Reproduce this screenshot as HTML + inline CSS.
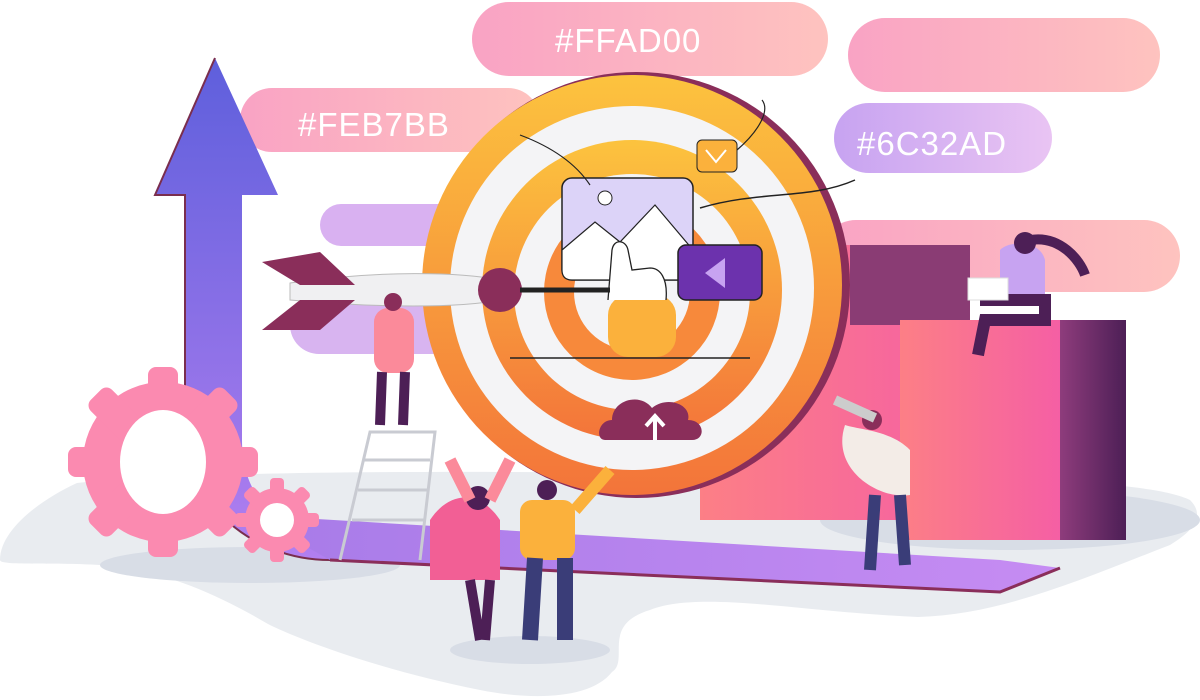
<!DOCTYPE html>
<html><head><meta charset="utf-8"><style>
html,body{margin:0;padding:0;background:#fff;}
svg{display:block}
text{font-family:"Liberation Sans",sans-serif;fill:#fff;font-size:33px;letter-spacing:1px}
</style></head><body>
<svg width="1200" height="700" viewBox="0 0 1200 700" xmlns="http://www.w3.org/2000/svg">
<defs>
<linearGradient id="pk" x1="0" x2="1"><stop offset="0" stop-color="#f9a3c4"/><stop offset="1" stop-color="#fec3bf"/></linearGradient>
<linearGradient id="pu" x1="0" x2="1"><stop offset="0" stop-color="#c7a3f1"/><stop offset="1" stop-color="#e9c4f3"/></linearGradient>
<linearGradient id="ar" x1="0" y1="0" x2="0" y2="1"><stop offset="0" stop-color="#5e5fdc"/><stop offset="1" stop-color="#b27ff0"/></linearGradient>
<linearGradient id="tg" x1="0" y1="0" x2="0" y2="1"><stop offset="0" stop-color="#fcc33e"/><stop offset="1" stop-color="#f3743a"/></linearGradient>
<linearGradient id="bx" x1="0" x2="1"><stop offset="0" stop-color="#fc7f86"/><stop offset="1" stop-color="#f55fa4"/></linearGradient>
<linearGradient id="bd" x1="0" x2="1"><stop offset="0" stop-color="#8e3c7c"/><stop offset="1" stop-color="#4d1f56"/></linearGradient>
<linearGradient id="fl" x1="0" x2="1"><stop offset="0" stop-color="#a77be8"/><stop offset="1" stop-color="#c68cf3"/></linearGradient>
</defs>
<!-- floor blob -->
<path d="M0 560 C0 530 40 500 77 483 C200 470 500 470 800 475 C1000 478 1150 480 1190 500 C1205 515 1195 530 1170 545 C1080 580 1000 615 918 617 C800 612 700 590 650 610 C600 625 630 660 612 672 C590 700 530 700 480 690 C380 670 300 640 268 624 C210 590 160 570 100 565 C50 562 0 566 0 560Z" fill="#e9ecf0"/>
<ellipse cx="530" cy="650" rx="80" ry="14" fill="#d8dde6"/>
<ellipse cx="1010" cy="520" rx="190" ry="30" fill="#d8dde6"/>
<ellipse cx="250" cy="565" rx="150" ry="18" fill="#d8dde6"/>
<!-- pills -->
<rect x="472" y="2" width="356" height="74" rx="37" fill="url(#pk)"/>
<text x="555" y="52">#FFAD00</text>
<rect x="848" y="18" width="312" height="74" rx="37" fill="url(#pk)"/>
<rect x="240" y="88" width="300" height="64" rx="32" fill="url(#pk)"/>
<text x="298" y="136">#FEB7BB</text>
<rect x="834" y="103" width="218" height="70" rx="35" fill="url(#pu)"/>
<text x="857" y="155">#6C32AD</text>
<rect x="320" y="204" width="200" height="42" rx="21" fill="#d9b1f1"/>
<rect x="820" y="220" width="360" height="72" rx="36" fill="url(#pk)"/>
<rect x="290" y="296" width="180" height="58" rx="29" fill="#d8b4f0"/>
<!-- arrow -->
<path d="M215 58 L278 195 L242 195 L242 440 C242 500 280 530 330 535 L330 560 C250 560 185 500 185 430 L185 195 L155 195 Z" fill="url(#ar)"/>
<path d="M215 58 L155 195 L185 195 L185 430 C185 500 250 560 330 560" fill="none" stroke="#7a2e4e" stroke-width="2"/>
<!-- floor band -->
<path d="M250 515 L1000 560 L1060 568 L1000 592 L330 560 Z" fill="url(#fl)"/>
<path d="M330 560 L1000 592 L1060 568" fill="none" stroke="#8a2e5a" stroke-width="3"/>
<!-- gears -->
<g fill="#fb8ab0">
<circle cx="163" cy="462" r="80"/>
<g transform="translate(163 462)">
<rect x="-15" y="-95" width="30" height="190" rx="8"/><rect x="-15" y="-95" width="30" height="190" rx="8" transform="rotate(45)"/><rect x="-15" y="-95" width="30" height="190" rx="8" transform="rotate(90)"/><rect x="-15" y="-95" width="30" height="190" rx="8" transform="rotate(135)"/></g>
<circle cx="277" cy="520" r="32"/>
<g transform="translate(277 520)"><rect x="-7" y="-42" width="14" height="84" rx="4"/><rect x="-7" y="-42" width="14" height="84" rx="4" transform="rotate(45)"/><rect x="-7" y="-42" width="14" height="84" rx="4" transform="rotate(90)"/><rect x="-7" y="-42" width="14" height="84" rx="4" transform="rotate(135)"/></g>
</g>
<ellipse cx="163" cy="462" rx="43" ry="52" fill="#fff"/>
<circle cx="277" cy="520" r="17" fill="#fff"/>
<!-- boxes -->
<rect x="700" y="245" width="270" height="275" fill="url(#bx)"/>
<rect x="850" y="245" width="120" height="80" fill="#8a3c74"/>
<rect x="900" y="320" width="160" height="220" fill="url(#bx)"/>
<rect x="1060" y="320" width="66" height="220" fill="url(#bd)"/>
<!-- target -->
<circle cx="637" cy="285" r="213" fill="#8a2e5a"/>
<circle cx="632" cy="285" r="210" fill="url(#tg)"/>
<circle cx="632" cy="288" r="182" fill="#f4f4f6"/>
<circle cx="632" cy="290" r="150" fill="url(#tg)"/>
<circle cx="632" cy="292" r="118" fill="#f4f4f6"/>
<circle cx="632" cy="292" r="88" fill="#f7893b"/>
<circle cx="632" cy="292" r="58" fill="#f4f4f6"/>
<line x1="510" y1="358" x2="750" y2="358" stroke="#222" stroke-width="1.5"/>
<!-- cloud -->
<path d="M605 440 C595 440 598 420 612 420 C612 400 640 392 652 408 C668 395 692 405 688 420 C705 420 706 440 692 440 Z" fill="#8a2e5a"/>
<path d="M655 440 V418 M646 426 L655 416 L664 426" stroke="#fff" stroke-width="4" fill="none"/>
<!-- card -->
<rect x="562" y="178" width="131" height="102" rx="10" fill="#dcd3f8" stroke="#222" stroke-width="1.5"/>
<path d="M562 250 L595 222 L620 242 L655 205 L693 250 L693 270 Q693 280 683 280 L572 280 Q562 280 562 270Z" fill="#fff" stroke="#222" stroke-width="1.2"/>
<circle cx="605" cy="198" r="7" fill="#fff" stroke="#222"/>
<rect x="678" y="245" width="84" height="55" rx="8" fill="#6c32ad" stroke="#222" stroke-width="1.5"/>
<path d="M725 258 L725 288 L705 273Z" fill="#c7a3f1"/>
<rect x="608" y="295" width="68" height="62" rx="20" fill="#fbb13c"/>
<path d="M608 300 L612 250 C614 238 626 240 628 250 L632 270 L650 268 C660 268 668 278 666 300" fill="#fff" stroke="#222" stroke-width="1.3"/>
<rect x="697" y="140" width="40" height="32" rx="5" fill="#fbb13c" stroke="#222"/>
<path d="M706 150 L716 162 L726 150" stroke="#fff" stroke-width="2" fill="none"/>
<path d="M700 208 C760 190 810 200 855 180" stroke="#222" stroke-width="1.5" fill="none"/>
<path d="M737 150 C760 130 770 110 762 100" stroke="#222" stroke-width="1.2" fill="none"/>
<path d="M520 135 C560 150 580 170 590 185" stroke="#222" stroke-width="1.2" fill="none"/>
<!-- dart -->
<path d="M290 283 C380 270 460 272 500 280 L500 300 C460 308 380 308 290 300 Z" fill="#f0f0f2" stroke="#bbb"/>
<circle cx="500" cy="290" r="22" fill="#8a2e5a"/>
<path d="M520 290 L610 290" stroke="#222" stroke-width="5"/>
<path d="M262 262 L320 252 L355 285 L300 285Z" fill="#8a2e5a"/>
<path d="M262 330 L320 330 L355 300 L300 300Z" fill="#8a2e5a"/>
<!-- people rough -->
<rect x="374" y="308" width="40" height="65" rx="14" fill="#fb8a9a"/>
<path d="M382 372 L380 425 M405 372 L403 425" stroke="#4d1f56" stroke-width="10"/>
<circle cx="393" cy="302" r="9" fill="#8a2e5a"/>
<path d="M340 560 L370 432 L435 432 L420 560 M352 520 L425 520 M358 490 L428 490 M364 460 L430 460" stroke="#c9cbd2" stroke-width="3" fill="none"/>
<path d="M430 520 C450 490 480 490 500 520 L500 580 L430 580 Z" fill="#f25f95"/>
<path d="M470 580 L480 640 M490 580 L485 640" stroke="#4d1f56" stroke-width="10"/>
<circle cx="478" cy="498" r="12" fill="#4d1f56"/>
<path d="M450 460 L470 500 M510 460 L490 500" stroke="#fb8a9a" stroke-width="12"/>
<rect x="520" y="500" width="55" height="60" rx="12" fill="#fbb13c"/>
<path d="M575 510 L610 470" stroke="#fbb13c" stroke-width="12"/>
<path d="M535 558 L530 640 M565 558 L565 640" stroke="#3a3d78" stroke-width="16"/>
<circle cx="547" cy="490" r="10" fill="#4d1f56"/>
<path d="M845 425 C830 470 880 500 910 495 L910 450 C890 430 860 430 845 425Z" fill="#f3ece7"/>
<path d="M875 495 L870 570 M900 495 L905 565" stroke="#3a3d78" stroke-width="12"/>
<circle cx="872" cy="420" r="10" fill="#8a2e5a"/>
<path d="M835 400 L875 418" stroke="#ccc" stroke-width="10"/>
<path d="M1000 250 C1010 240 1040 240 1045 260 L1045 300 L1000 300 Z" fill="#c7a3f1"/>
<circle cx="1025" cy="243" r="11" fill="#4d1f56"/>
<path d="M1030 240 C1060 235 1080 260 1085 275" stroke="#4d1f56" stroke-width="10" fill="none"/>
<path d="M980 300 L1045 300 L1045 320 L985 320 L978 355" stroke="#4d1f56" stroke-width="12" fill="none"/>
<rect x="968" y="278" width="40" height="22" fill="#fff" stroke="#ddd"/>
</svg>
</body></html>
